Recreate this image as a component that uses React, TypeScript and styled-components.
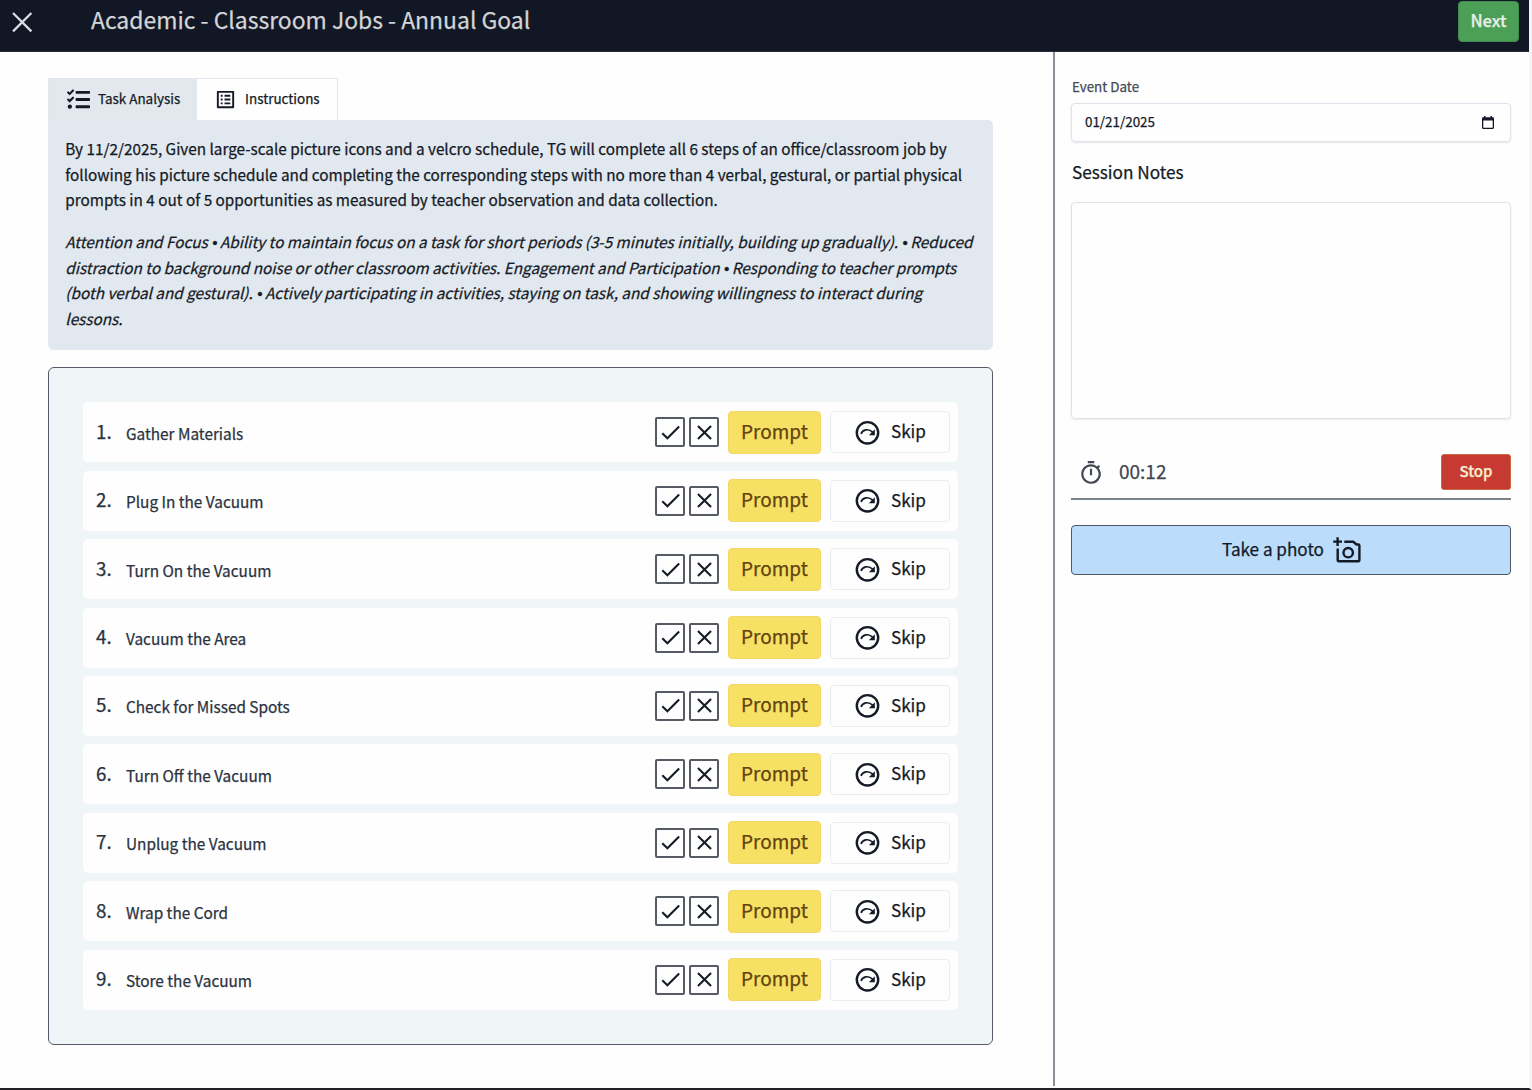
import React from 'react';
import styled, { createGlobalStyle } from 'styled-components';
import { MdCheck, MdClose, MdOutlineListAlt, MdOutlineTimer } from 'react-icons/md';
import { FaTasks } from 'react-icons/fa';

const Global = createGlobalStyle`
  *, *::before, *::after { box-sizing: border-box; }
  body {
    margin: 0;
    background: #fefefe;
    color: #141a26;
    font-family: "Noto Sans CJK SC", "Noto Sans", sans-serif;
    -webkit-text-stroke: 0.25px currentColor;
  }
  button, h1, h2, p, ol { margin: 0; padding: 0; font: inherit; }
  svg { display: block; flex: none; }
`;

const Screen = styled.div`
  width: 1532px;
  height: 1090px;
  display: flex;
  flex-direction: column;
  overflow: hidden;
  border-right: 3px solid #f4f5f7;
  border-bottom: 2px solid #222126;
`;

const Header = styled.header`
  flex: none;
  height: 52px;
  display: flex;
  align-items: flex-start;
  padding: 0 10px 0 11px;
  background: #111724;
  border-bottom: 1px solid #262c38;
`;

const CloseButton = styled.button`
  margin-top: 11px;
  width: 22px;
  height: 22px;
  border: 0;
  background: none;
  color: #d9dbde;
`;

const Title = styled.h1`
  flex: 1;
  margin-left: 58px;
  font-size: 22.93px;
  font-weight: 400;
  line-height: 39px;
  color: #d3d5d8;
  white-space: nowrap;
`;

const NextButton = styled.button`
  width: 61px;
  height: 41px;
  margin-top: 1px;
  padding-bottom: 3px;
  border: 1px solid #418a50;
  border-radius: 4px;
  background: #4b9f57;
  color: #e9efe9;
  font-size: 16.6px;
  font-weight: 500;
  line-height: 36px;
`;

const Body = styled.div`
  flex: 1;
  display: flex;
  min-height: 0;
`;

const Main = styled.main`
  width: 1055px;
  height: 1034px;
  padding: 26px 60px 0 48px;
  border-right: 2px solid #8b9098;
`;

const Tabs = styled.div`
  display: flex;
  width: 290px;
  height: 42px;
  border: 1px solid #e0e6eb;
  border-bottom: 0;
`;

const Tab = styled.div<{ $active?: boolean }>`
  display: flex;
  align-items: center;
  width: ${(p) => (p.$active ? 148 : 140)}px;
  padding-left: ${(p) => (p.$active ? 18 : 17)}px;
  gap: 8px;
  background: ${(p) => (p.$active ? '#e2e8ed' : '#fefefe')};
  font-size: 13.45px;
  line-height: 20px;
  white-space: nowrap;
`;

const TabLabel = styled.span`
  margin-top: -4px;
`;

const GoalPanel = styled.section`
  height: 230px;
  width: 945px;
  padding: 16px 0 0 17.3px;
  border-radius: 0 5px 6px 6px;
  background: #e2e8ef;
  font-size: 15.31px;
  line-height: 25.5px;
  white-space: nowrap;
`;

const Paragraph = styled.p<{ $italic?: boolean }>`
  font-style: ${(p) => (p.$italic ? 'italic' : 'normal')};
  & + & { margin-top: 16.5px; }
`;

const Bullet = styled.span`
  margin: 0 -1px 0 1px;
  font-family: "Liberation Sans", sans-serif;
  font-style: normal;
  line-height: 0;
`;

const Steps = styled.ol`
  display: flex;
  flex-direction: column;
  gap: 8.4px;
  width: 945px;
  height: 678px;
  margin-top: 17px;
  padding: 34.4px 34px 0 34px;
  border: 1.5px solid #555b66;
  border-radius: 6px;
  background: #f0f5f8;
  list-style: none;
`;

const Step = styled.li`
  flex: none;
  display: flex;
  align-items: center;
  height: 60px;
  padding: 0 8px 0 13px;
  border-radius: 5px;
  background: #fefefe;
`;

const StepNumber = styled.span`
  width: 30px;
  margin-top: -3px;
  font-size: 18.8px;
  line-height: 26px;
  color: #2b323e;
`;

const StepName = styled.span`
  flex: 1;
  margin-top: 1px;
  font-size: 15.35px;
  line-height: 22px;
  color: #2b323e;
`;

const MarkButton = styled.button`
  display: flex;
  align-items: center;
  justify-content: center;
  width: 30px;
  height: 30px;
  margin-right: 4px;
  border: 2px solid #555a63;
  border-radius: 2px;
  background: #fefefe;
  color: #171c27;
`;

const PromptButton = styled.button`
  width: 93px;
  height: 43px;
  margin-left: 5px;
  padding-bottom: 3px;
  border: 1px solid #f3d768;
  border-radius: 4px;
  background: #f7e164;
  color: #63430f;
  font-size: 19px;
  line-height: 36px;
`;

const SkipButton = styled.button`
  display: flex;
  align-items: center;
  gap: 11px;
  width: 120px;
  height: 42px;
  margin-left: 9px;
  padding-left: 24px;
  border: 1px solid #e9edf1;
  border-radius: 4px;
  background: #fefefe;
  color: #141a26;
  font-size: 17.1px;
`;

const SkipLabel = styled.span`
  margin-top: -2px;
  line-height: 24px;
`;

const Side = styled.aside`
  display: flex;
  flex-direction: column;
  flex: 1;
  padding: 26px 18px 0 16px;
`;

const DateLabel = styled.label`
  height: 25px;
  padding-left: 1px;
  font-size: 13.4px;
  line-height: 17px;
  color: #434b57;
`;

const DateField = styled.div`
  display: flex;
  align-items: center;
  justify-content: space-between;
  height: 39px;
  padding: 0 16px 0 13px;
  border: 1px solid #dde3ea;
  border-radius: 4px;
  box-shadow: 0 1px 2px rgba(30, 50, 70, 0.12);
  font-size: 13.4px;
  line-height: 20px;
`;

const DateValue = styled.span`
  margin-top: -4px;
`;

const NotesHeading = styled.h2`
  margin-top: 17px;
  height: 43px;
  padding-left: 1px;
  font-size: 17.2px;
  font-weight: 400;
  line-height: 26px;
`;

const NotesField = styled.div`
  height: 217px;
  border: 1px solid #dde3e9;
  border-radius: 4px;
  box-shadow: 0 1px 2px rgba(30, 50, 70, 0.1);
`;

const TimerRow = styled.div`
  display: flex;
  align-items: center;
  height: 54px;
  margin-top: 27px;
  padding-left: 7px;
  border-bottom: 2px solid #7b838d;
  color: #414853;
`;

const TimerIcon = styled(MdOutlineTimer)`
  margin-top: 1px;
`;

const TimerValue = styled.span`
  flex: 1;
  margin: -2px 0 0 15px;
  font-size: 19px;
  line-height: 26px;
`;

const StopButton = styled.button`
  width: 70px;
  height: 36px;
  padding-bottom: 3px;
  border: 1px solid #c8683c;
  border-radius: 3px;
  background: #c63a33;
  color: #f8efcf;
  font-size: 15px;
  font-weight: 500;
  line-height: 31px;
`;

const PhotoButton = styled.button`
  display: flex;
  align-items: center;
  justify-content: center;
  gap: 9px;
  height: 50px;
  margin-top: 25px;
  padding-left: 1px;
  border: 1.5px solid #4f5966;
  border-radius: 4px;
  background: #bbdcfb;
  color: #141a26;
  font-size: 17.1px;
  line-height: 26px;
`;

const PhotoLabel = styled.span`
  margin-top: -2px;
`;

const CrossIcon = () => (
  <svg width="22" height="22" viewBox="0 0 22 22" stroke="currentColor" strokeWidth="2.3" fill="none">
    <path d="M2 2 20.4 20.4M20.4 2 2 20.4" />
  </svg>
);

const SkipIcon = () => (
  <svg width="25" height="25" viewBox="0 0 25 25" fill="none" stroke="currentColor">
    <circle cx="12.5" cy="12.8" r="10.7" strokeWidth="2.4" />
    <path d="M6 13.9C7.6 9.5 13.4 8.2 17.6 12.100" strokeWidth="1.7" />
    <path d="M19.8 9.200v6h-6z" fill="currentColor" stroke="none" />
  </svg>
);

const CalendarIcon = () => (
  <svg width="12" height="14" viewBox="0 0 12 14">
    <path
      fill="currentColor"
      fillRule="evenodd"
      d="M2 0h1.5v1.3h5V0H10v1.3h.8c.7 0 1.2.5 1.2 1.2v9.3c0 .7-.5 1.2-1.2 1.2H1.2C.5 13 0 12.5 0 11.8V2.5c0-.7.5-1.2 1.2-1.2H2zM1.3 4.6v7.1h9.4V4.6z"
    />
  </svg>
);

const AddPhotoIcon = () => (
  <svg width="28" height="28" viewBox="0 0 28 28" fill="none" stroke="currentColor" strokeWidth="2.4">
    <path d="M4.6 1.200v8.800M0.200 5.600h8.800" />
    <path d="M11.300 5.800H20.300l3.200 2.700h1.900q1 0 1 1V24.300q0 1-1 1H5.700q-1 0-1-1V12.500" />
    <circle cx="15.200" cy="16.700" r="4.700" />
  </svg>
);

const steps = [
  'Gather Materials',
  'Plug In the Vacuum',
  'Turn On the Vacuum',
  'Vacuum the Area',
  'Check for Missed Spots',
  'Turn Off the Vacuum',
  'Unplug the Vacuum',
  'Wrap the Cord',
  'Store the Vacuum',
];

export default function App() {
  return (
    <Screen>
      <Global />
      <Header>
        <CloseButton aria-label="Close"><CrossIcon /></CloseButton>
        <Title>Academic - Classroom Jobs - Annual Goal</Title>
        <NextButton>Next</NextButton>
      </Header>
      <Body>
        <Main>
          <Tabs>
            <Tab $active><FaTasks size={23} /><TabLabel>Task Analysis</TabLabel></Tab>
            <Tab><MdOutlineListAlt size={23} /><TabLabel>Instructions</TabLabel></Tab>
          </Tabs>
          <GoalPanel>
            <Paragraph>
              By 11/2/2025, Given large-scale picture icons and a velcro schedule, TG will complete all 6 steps of an office/classroom job by<br />
              following his picture schedule and completing the corresponding steps with no more than 4 verbal, gestural, or partial physical<br />
              prompts in 4 out of 5 opportunities as measured by teacher observation and data collection.
            </Paragraph>
            <Paragraph $italic>
              Attention and Focus <Bullet>•</Bullet> Ability to maintain focus on a task for short periods (3-5 minutes initially, building up gradually). <Bullet>•</Bullet> Reduced<br />
              distraction to background noise or other classroom activities. Engagement and Participation <Bullet>•</Bullet> Responding to teacher prompts<br />
              (both verbal and gestural). <Bullet>•</Bullet> Actively participating in activities, staying on task, and showing willingness to interact during<br />
              lessons.
            </Paragraph>
          </GoalPanel>
          <Steps>
            {steps.map((name, i) => (
              <Step key={name}>
                <StepNumber>{i + 1}.</StepNumber>
                <StepName>{name}</StepName>
                <MarkButton aria-label="Correct"><MdCheck size={25} /></MarkButton>
                <MarkButton aria-label="Incorrect"><MdClose size={25} /></MarkButton>
                <PromptButton>Prompt</PromptButton>
                <SkipButton><SkipIcon /><SkipLabel>Skip</SkipLabel></SkipButton>
              </Step>
            ))}
          </Steps>
        </Main>
        <Side>
          <DateLabel>Event Date</DateLabel>
          <DateField><DateValue>01/21/2025</DateValue><CalendarIcon /></DateField>
          <NotesHeading>Session Notes</NotesHeading>
          <NotesField />
          <TimerRow>
            <TimerIcon size={26} />
            <TimerValue>00:12</TimerValue>
            <StopButton>Stop</StopButton>
          </TimerRow>
          <PhotoButton><PhotoLabel>Take a photo</PhotoLabel><AddPhotoIcon /></PhotoButton>
        </Side>
      </Body>
    </Screen>
  );
}
